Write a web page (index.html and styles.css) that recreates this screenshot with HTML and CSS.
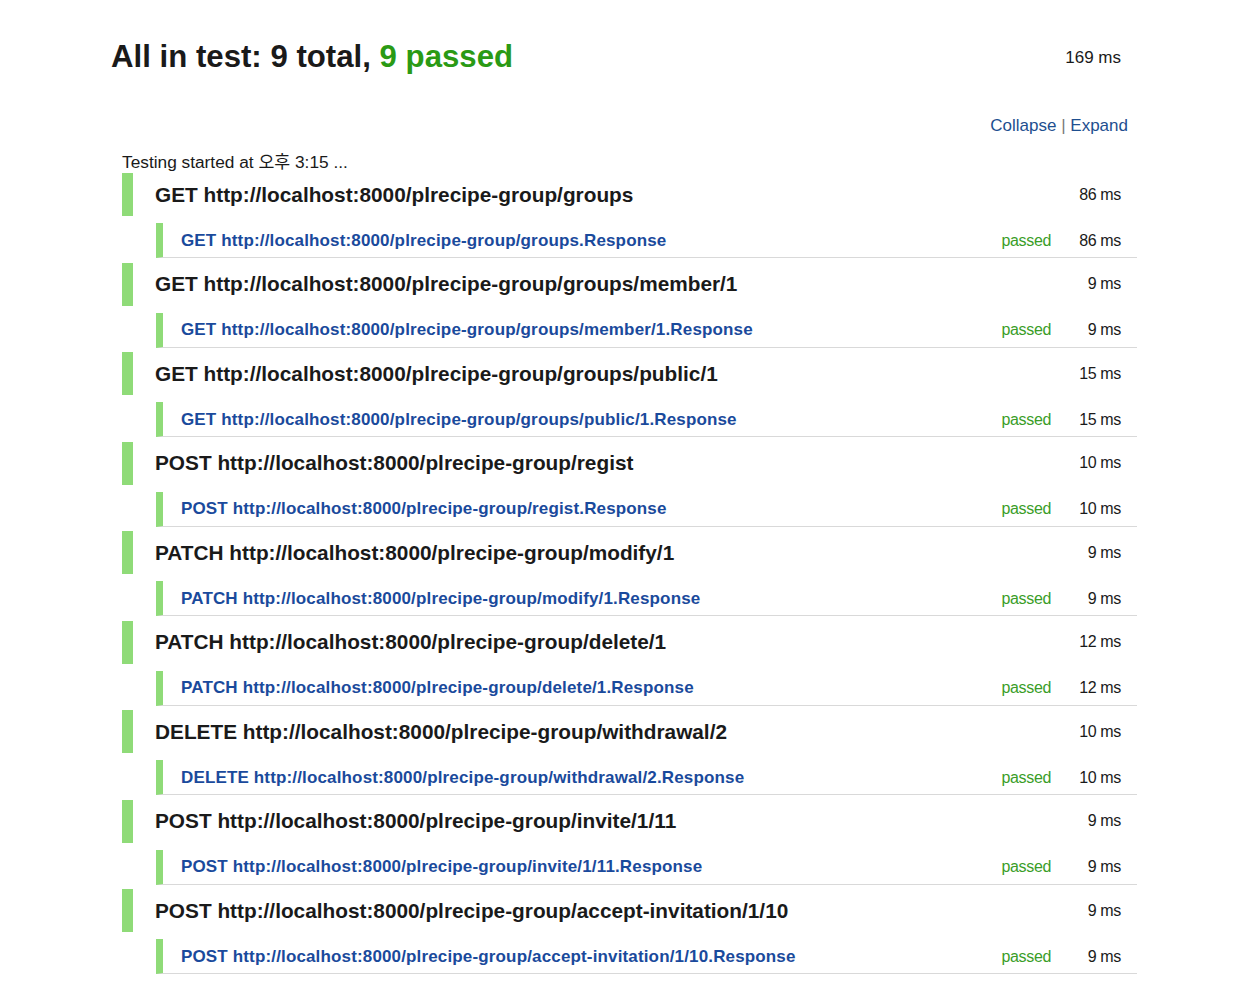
FILE: index.html
```html
<!DOCTYPE html>
<html>
<head>
<meta charset="utf-8">
<link rel="stylesheet" href="styles.css">
</head>
<body>
<div class="page">
  <div class="header">
    <h1 class="title">All in test: 9 total, <span class="ok">9 passed</span></h1>
    <div class="total-time">169 ms</div>
  </div>
  <div class="toolbar"><a class="link">Collapse</a> <span class="sep">|</span> <a class="link">Expand</a></div>
  <div class="tree">
    <div class="started">Testing started at 오후 3:15 ...</div>
    <div class="suites">
      <div class="suite">
        <div class="suite-row"><span class="suite-name">GET http://localhost:8000/plrecipe-group/groups</span><span class="time">86 ms</span></div>
        <div class="test"><span class="test-name">GET http://localhost:8000/plrecipe-group/groups.Response</span><span class="status">passed</span><span class="time">86 ms</span></div>
      </div>
      <div class="suite">
        <div class="suite-row"><span class="suite-name">GET http://localhost:8000/plrecipe-group/groups/member/1</span><span class="time">9 ms</span></div>
        <div class="test"><span class="test-name">GET http://localhost:8000/plrecipe-group/groups/member/1.Response</span><span class="status">passed</span><span class="time">9 ms</span></div>
      </div>
      <div class="suite">
        <div class="suite-row"><span class="suite-name">GET http://localhost:8000/plrecipe-group/groups/public/1</span><span class="time">15 ms</span></div>
        <div class="test"><span class="test-name">GET http://localhost:8000/plrecipe-group/groups/public/1.Response</span><span class="status">passed</span><span class="time">15 ms</span></div>
      </div>
      <div class="suite">
        <div class="suite-row"><span class="suite-name">POST http://localhost:8000/plrecipe-group/regist</span><span class="time">10 ms</span></div>
        <div class="test"><span class="test-name">POST http://localhost:8000/plrecipe-group/regist.Response</span><span class="status">passed</span><span class="time">10 ms</span></div>
      </div>
      <div class="suite">
        <div class="suite-row"><span class="suite-name">PATCH http://localhost:8000/plrecipe-group/modify/1</span><span class="time">9 ms</span></div>
        <div class="test"><span class="test-name">PATCH http://localhost:8000/plrecipe-group/modify/1.Response</span><span class="status">passed</span><span class="time">9 ms</span></div>
      </div>
      <div class="suite">
        <div class="suite-row"><span class="suite-name">PATCH http://localhost:8000/plrecipe-group/delete/1</span><span class="time">12 ms</span></div>
        <div class="test"><span class="test-name">PATCH http://localhost:8000/plrecipe-group/delete/1.Response</span><span class="status">passed</span><span class="time">12 ms</span></div>
      </div>
      <div class="suite">
        <div class="suite-row"><span class="suite-name">DELETE http://localhost:8000/plrecipe-group/withdrawal/2</span><span class="time">10 ms</span></div>
        <div class="test"><span class="test-name">DELETE http://localhost:8000/plrecipe-group/withdrawal/2.Response</span><span class="status">passed</span><span class="time">10 ms</span></div>
      </div>
      <div class="suite">
        <div class="suite-row"><span class="suite-name">POST http://localhost:8000/plrecipe-group/invite/1/11</span><span class="time">9 ms</span></div>
        <div class="test"><span class="test-name">POST http://localhost:8000/plrecipe-group/invite/1/11.Response</span><span class="status">passed</span><span class="time">9 ms</span></div>
      </div>
      <div class="suite">
        <div class="suite-row"><span class="suite-name">POST http://localhost:8000/plrecipe-group/accept-invitation/1/10</span><span class="time">9 ms</span></div>
        <div class="test"><span class="test-name">POST http://localhost:8000/plrecipe-group/accept-invitation/1/10.Response</span><span class="status">passed</span><span class="time">9 ms</span></div>
      </div>
    </div>
  </div>
</div>
</body>
</html>
```
FILE: styles.css
```css
html, body {
  margin: 0;
  padding: 0;
  background: #ffffff;
}
body {
  font-family: "Liberation Sans", Arial, "Noto Sans CJK KR", sans-serif;
  color: #1a1a1a;
}
.page {
  margin-left: 111px;
  width: 1026px;
}
.header {
  display: flex;
  justify-content: space-between;
  align-items: center;
  height: 36px;
  margin-top: 39px;
  padding-right: 16px;
}
.title {
  margin: 0;
  font-size: 31.2px;
  font-weight: bold;
  line-height: 36px;
  color: #1a1a1a;
}
.ok {
  color: #2a9a15;
}
.total-time {
  font-size: 17px;
  color: #1a1a1a;
  padding-top: 2px;
}
.toolbar {
  margin-top: 41px;
  height: 20px;
  line-height: 20px;
  text-align: right;
  padding-right: 9px;
  font-size: 17px;
}
.link {
  color: #1e4f8f;
}
.sep {
  color: #7a7a7a;
}
.tree {
  margin-left: 11px;
}
.started {
  margin-top: 16px;
  height: 20px;
  line-height: 20px;
  font-size: 17.3px;
  color: #1a1a1a;
}
.suites {
  margin-top: 1px;
  display: flex;
  flex-direction: column;
  gap: 4.5px;
}
.suite-row {
  display: flex;
  justify-content: space-between;
  align-items: center;
  height: 43px;
  border-left: 11px solid #8fdb78;
  padding-left: 22px;
  padding-right: 16px;
}
.suite-name {
  font-size: 20.8px;
  font-weight: bold;
  color: #1a1a1a;
}
.time {
  font-size: 16px;
  letter-spacing: -0.35px;
  color: #1a1a1a;
  white-space: nowrap;
}
.test {
  display: flex;
  align-items: center;
  height: 34px;
  margin-top: 7px;
  margin-left: 34px;
  border-left: 7px solid #8fdb78;
  border-bottom: 1px solid #d9d9d9;
  padding-left: 18px;
  padding-right: 16px;
}
.test-name {
  flex: 1;
  font-size: 17px;
  font-weight: bold;
  color: #1a4a9c;
  letter-spacing: 0.15px;
  white-space: nowrap;
  padding-top: 1px;
}
.status {
  font-size: 16px;
  letter-spacing: -0.35px;
  color: #3a9d28;
  margin-right: 27px;
  padding-top: 1px;
}
.test .time {
  flex: 0 0 43px;
  text-align: right;
  padding-top: 1px;
}
```
